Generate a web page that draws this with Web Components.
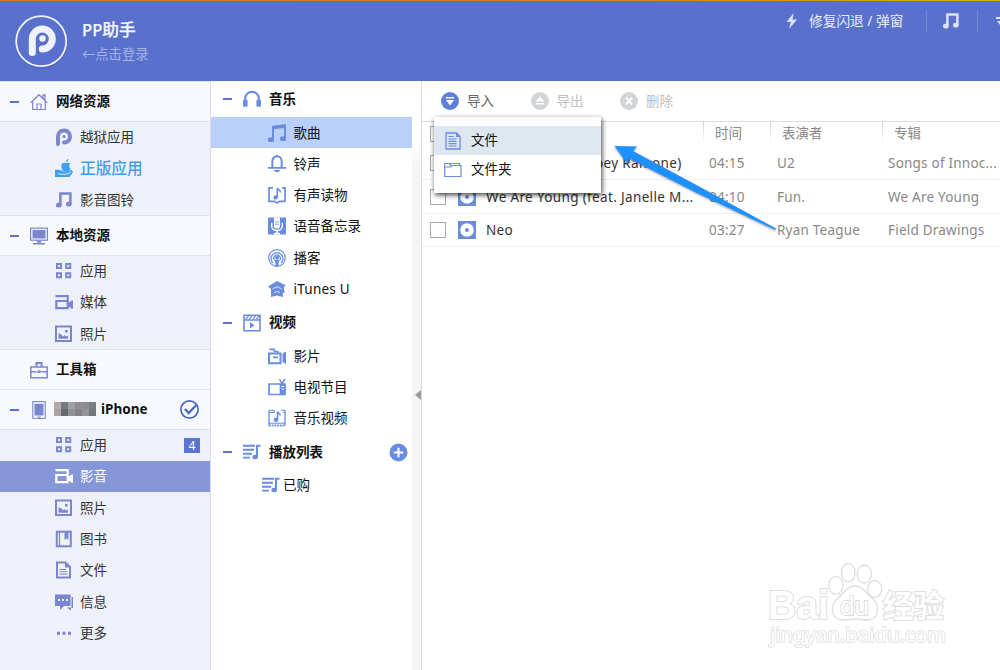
<!DOCTYPE html>
<html lang="zh-CN">
<head>
<meta charset="utf-8">
<title>PP助手</title>
<style>
  body {
    background-color: #fff;
    font-family: 'Noto Sans', 'Noto Sans CJK SC', sans-serif;
    font-size: 13.5px;
    height: 670px;
    line-height: 20px;
    margin: 0;
    overflow: hidden;
    width: 1000px;
  }
</style>
</head>
<body>
<pp-app>
  <pp-header slot="header"></pp-header>

  <pp-sidebar slot="sidebar">
    <pp-heading icon="home" open style="--height: 41.4px">网络资源</pp-heading>
    <pp-group>
      <pp-item icon="pp">越狱应用</pp-item>
      <pp-item icon="apple" class="promo">正版应用</pp-item>
      <pp-item icon="note">影音图铃</pp-item>
    </pp-group>
    <pp-heading icon="monitor" open>本地资源</pp-heading>
    <pp-group>
      <pp-item icon="grid">应用</pp-item>
      <pp-item icon="media">媒体</pp-item>
      <pp-item icon="photo">照片</pp-item>
    </pp-group>
    <pp-heading icon="toolbox">工具箱</pp-heading>
    <pp-heading icon="phone" open>
      <pp-mosaic></pp-mosaic>iPhone
      <pp-icon slot="end" name="check"></pp-icon>
    </pp-heading>
    <pp-group>
      <pp-item icon="grid" badge="4">应用</pp-item>
      <pp-item icon="media" active>影音</pp-item>
      <pp-item icon="photo">照片</pp-item>
      <pp-item icon="book">图书</pp-item>
      <pp-item icon="doc">文件</pp-item>
      <pp-item icon="chat">信息</pp-item>
      <pp-item icon="more">更多</pp-item>
    </pp-group>
  </pp-sidebar>

  <pp-library slot="library">
    <pp-heading icon="headphones" open style="--height: 36.9px">音乐</pp-heading>
    <pp-item icon="song" active>歌曲</pp-item>
    <pp-item icon="bell">铃声</pp-item>
    <pp-item icon="audiobook">有声读物</pp-item>
    <pp-item icon="mic">语音备忘录</pp-item>
    <pp-item icon="podcast">播客</pp-item>
    <pp-item icon="itunesu" class="wide">iTunes U</pp-item>
    <pp-heading icon="clapper" open>视频</pp-heading>
    <pp-item icon="movie">影片</pp-item>
    <pp-item icon="tv">电视节目</pp-item>
    <pp-item icon="mv">音乐视频</pp-item>
    <pp-heading icon="list" open>播放列表<pp-icon slot="end" name="plus"></pp-icon></pp-heading>
    <pp-item icon="list" class="playlist">已购</pp-item>
  </pp-library>

  <pp-tracks slot="main">
    <pp-tool slot="tools" icon="import">导入</pp-tool>
    <pp-tool slot="tools" icon="export" disabled>导出</pp-tool>
    <pp-tool slot="tools" icon="remove" disabled>删除</pp-tool>
    <pp-track name="The Miracle (Of Joey Ramone)" time="04:15" artist="U2" album="Songs of Innoc..."></pp-track>
    <pp-track name="We Are Young (feat. Janelle M..." time="04:10" artist="Fun." album="We Are Young"></pp-track>
    <pp-track name="Neo" time="03:27" artist="Ryan Teague" album="Field Drawings"></pp-track>
    <pp-menu slot="menu"></pp-menu>
  </pp-tracks>
</pp-app>
<pp-pointer></pp-pointer>
<pp-watermark></pp-watermark>

<script>
// every icon is drawn on an 18 x 18 grid with currentColor
const icons = {
  home: '<path d="M.8 9.7 9 1.7l8.2 8M13 5V2h2v5" fill="none" stroke="currentColor" stroke-width="1.3"/><path d="M2.7 9v7.5h12.6V9M7 16v-5h4v5" fill="none" stroke="currentColor" stroke-width="1.2"/>',
  pp: '<path d="M3 16V8.5a6 6 0 1 1 6 6" fill="none" stroke="currentColor" stroke-width="4" stroke-linecap="round"/><circle cx="9" cy="8.5" r="1.6" fill="currentColor"/>',
  apple: '<path d="M13.300 0c.1 1.500-.8 2.800-2.200 3 0-1.600.8-2.700 2.200-3zM6.500 6c.8-2.600 3-2.500 4.600-1.800 1.800-.8 3.400-.2 4.200.9-1.800 1.200-1.500 3.400.3 4.200-.5 1.800-1.500 3.200-2.900 3.200H9C7 11 5.800 8.500 6.500 6z" fill="currentColor"/><path d="M0 10.700h4.500l4.300 1.800h3l5-1.400 1.200 1.800-3.500 5H0z" fill="currentColor"/><path d="M3 14l2 1.200h7l4-2" stroke="#eef1fa" fill="none" stroke-width=".9"/>',
  note: '<path d="M5.400 14V2.500h10V13" fill="none" stroke="currentColor" stroke-width="2.500"/><rect x="1" y="11.800" width="5.600" height="4.800" rx="2" fill="currentColor"/><rect x="11" y="10.800" width="5.600" height="4.800" rx="2" fill="currentColor"/>',
  monitor: '<rect x=".6" y="1.200" width="16.800" height="12" fill="none" stroke="currentColor" stroke-width="1.200"/><path d="M2.500 3h13v8.500h-13zM7 13.500h4v2.300H7zM3 16h12v1.500H3z" fill="currentColor"/>',
  grid: '<path d="M2 2h4v4H2zM11.200 2h4v4h-4zM2 11.200h4v4H2zM11.200 11.200h4v4h-4z" fill="none" stroke="currentColor" stroke-width="2"/>',
  media: '<path d="M.5 3.200h12.200v12H1.300V8h11.400" fill="none" stroke="currentColor" stroke-width="2.200"/><path d="m13 10 3.700-2.600H18v8.400h-1.300L13 13z" fill="currentColor"/>',
  photo: '<rect x="1" y="1.500" width="15" height="14.500" fill="none" stroke="currentColor" stroke-width="2"/><path d="M3.500 8.500h1.200l1.800 1.300L8 11.500l1.700-1.600 1.100 1.500 2.200-1v3.400H3.500zM10 5h2.600v2.600H10z" fill="currentColor"/>',
  toolbox: '<path d="M.8 6h16.400v10.800H.8zM.8 10.700h5.700m5 0h5.700" fill="none" stroke="currentColor" stroke-width="1.500"/><path d="M6.500 6V2h5v4" fill="none" stroke="currentColor" stroke-width="2"/><path d="M7.200 9.500h3.600v2.400H7.200z" fill="currentColor"/>',
  phone: '<rect x="2.800" y=".6" width="12.400" height="17" fill="none" stroke="currentColor" stroke-width="1.100"/><path d="M4.500 2.700h9v11.800h-9zM7.500 15.500h3v1.300h-3z" fill="currentColor"/>',
  check: '<circle cx="9" cy="9" r="8.200" fill="none" stroke="currentColor" stroke-width="1.600"/><path d="m4.600 8.500 3.600 3.900 7.300-7.600" fill="none" stroke="currentColor" stroke-width="2"/>',
  book: '<rect x="1.800" y="1.700" width="14" height="14.600" fill="none" stroke="currentColor" stroke-width="2"/><path d="M4.500 2v14" stroke="currentColor" stroke-width="1.200"/><path d="M9.500 2h4v8l-2-1.700-2 1.700z" fill="currentColor"/>',
  doc: '<path d="M2 1.600h8.500L15 6v10.400H2z" fill="none" stroke="currentColor" stroke-width="2"/><path d="M4.500 8.500H11M4.500 10.800h8M4.500 13.200h8" stroke="currentColor"/><path d="M10 1v5.500h5.500z" fill="currentColor"/>',
  chat: '<path d="M0 1.500h15.500V13H9l-4 4v-4H0z" fill="currentColor"/><path d="M16.500 4H18v11h-2v2.500L12 14.500h4.500z" fill="currentColor"/><path d="M3 6h2v2H3zM7 6h2v2H7zM11 6h2v2h-2z" fill="#eef1fa"/>',
  more: '<path d="M2 7.700h3v3H2zM7.500 7.700h3v3h-3zM13 7.700h3v3h-3z" fill="currentColor"/>',
  headphones: '<path d="M2.200 12V8.500a6.800 6.800 0 0 1 13.600 0V12" fill="none" stroke="currentColor" stroke-width="2"/><rect y="9.500" width="4.600" height="7.300" rx="1.500" fill="currentColor"/><rect x="13.400" y="9.500" width="4.600" height="7.300" rx="1.500" fill="currentColor"/>',
  song: '<path d="M5 15.500V3l12-1.500V14" fill="none" stroke="currentColor" stroke-width="2"/><path d="M4 2 18 .3v3.400L4 5.300z" fill="currentColor"/><rect y="13.500" width="6" height="4.500" rx="1.800" fill="currentColor"/><rect x="12" y="12.500" width="6" height="4.500" rx="1.800" fill="currentColor"/>',
  bell: '<path d="M4.300 12.500V6.500a4.700 5.300 0 0 1 9.400 0v6" fill="none" stroke="currentColor" stroke-width="2"/><path d="M0 12h18v1.800H0zM6 15h6c-.5 3-5.500 3-6 0zM8 0h2v2H8z" fill="currentColor"/>',
  audiobook: '<path d="M5 1.800H1v13.500h5.500L9 17l2.500-1.700H17V1.800h-3" fill="none" stroke="currentColor" stroke-width="1.700"/><path d="M9.300 12V2c.5 1.800 3 1.800 3.300 4.500" fill="none" stroke="currentColor" stroke-width="1.600"/><circle cx="7.600" cy="11.400" r="2.200" fill="currentColor"/>',
  mic: '<path d="M0 .5h18v17H0z" fill="currentColor"/><path d="M6 .5h6v3H6z" fill="#fff"/><rect x="6" y="2" width="6" height="9.500" rx="2.500" fill="#fff"/><path d="M3.700 6v3c0 6 10.600 6 10.600 0V6M9 13v4" fill="none" stroke="#fff" stroke-width="1.400"/><path d="M6 15.800h6v1.700H6z" fill="#fff"/><path d="M7 5h4M7 7.200h4" stroke="currentColor" stroke-width=".8"/>',
  podcast: '<g fill="none" stroke="currentColor"><circle cx="9" cy="9" r="8.300" stroke-width="1.200"/><path d="M5 14a6 6 0 1 1 8 0M6.500 11.500a3.300 3.300 0 1 1 5 0" stroke-width="1.300"/></g><circle cx="9" cy="8.700" r="2" fill="currentColor"/><path d="M7 11h4l-.5 6h-3z" fill="currentColor"/>',
  itunesu: '<path d="M9 1 18 5.500l-2 1.300V10l1 2-2 1v4l-6-1.500L3 17V9L0 6.500z" fill="currentColor"/><path d="m4.500 8.700 4.500-2 4.500 2M9 11.500l-3 1m3-1 3 1" fill="none" stroke="#fff" stroke-width=".8"/>',
  clapper: '<path d="M1 1.300h16v15.500H1zM1 6h16" fill="none" stroke="currentColor" stroke-width="1.600"/><path d="m3 5 2.500-3M6.500 5 9 2m1 3 2.500-3m1 3L16 2" stroke="currentColor" stroke-width="1.200"/><path d="m7 8 4.500 3.300L7 14.500z" fill="currentColor"/>',
  movie: '<path d="M1 6.500h11.500v9.800H1z" fill="none" stroke="currentColor" stroke-width="2"/><path d="M1.500 1.500H7v2.300h3.500V6H8.700V5.300H5.500V3.300h-4zM5 9.500h5v1.700H5zM14.500 7 17 4.800h1v12h-1l-2.500-2.200z" fill="currentColor"/>',
  tv: '<path d="M1 6h16v10.500H1zM12.500 6v10" fill="none" stroke="currentColor" stroke-width="1.700"/><path d="M12 6h5v10h-5z" fill="currentColor"/><path d="m11.500 1 2.500 4.500L17 1" fill="none" stroke="currentColor" stroke-width="1.500"/><path d="M13.500 8.500H16m-2.500 2.500H16" stroke="#fff"/>',
  mv: '<path d="M1 1.300v15.500m16 0V1.300" fill="none" stroke="currentColor" stroke-width="1.300"/><path d="M1 1.300h5.500v2.200H1M17 1.300h-4m4 2.200h-2M.5 14.200h17" fill="none" stroke="currentColor" stroke-width="1"/><path d="M1 16.500h16" stroke="currentColor" stroke-width="1.800" stroke-dasharray="1.700 1"/><path d="M9.500 11.500v-9c.5 2 2.500 2 3 4" fill="none" stroke="currentColor" stroke-width="1.600"/><circle cx="8" cy="10.800" r="2.200" fill="currentColor"/>',
  list: '<path d="M0 2.800h12M0 6.800h11M0 10.700h9M0 14.600h7" stroke="currentColor" stroke-width="1.900"/><path d="M14 14V2.800h3.500" fill="none" stroke="currentColor" stroke-width="2"/><ellipse cx="12.200" cy="14" rx="2.800" ry="2.200" fill="currentColor"/>',
  plus: '<circle cx="9" cy="9" r="8.500" fill="currentColor"/><path d="M9 4.500v9M4.500 9h9" stroke="#fff" stroke-width="2"/>',
  import: '<circle cx="9" cy="9" r="9" fill="currentColor"/><path d="M5 5h8v1.500H5zM5 8h8l-4 5.500z" fill="#fff"/>',
  export: '<circle cx="9" cy="9" r="9" fill="currentColor"/><path d="m9 4.500 4.500 5h-9zM5 11h8v1.500H5z" fill="#fff"/>',
  remove: '<circle cx="9" cy="9" r="9" fill="currentColor"/><path d="m6 5.700 6 6.600m0-6.600-6 6.600" stroke="#fff" stroke-width="2"/>',
  disc: '<path d="M0 0h18v18H0z" fill="currentColor"/><circle cx="9" cy="9" r="6.800" fill="#fff"/><circle cx="9" cy="9" r="2" fill="currentColor"/>',
  file: '<path d="M2 1h10.500L16 4.500V17H2z" fill="none" stroke="currentColor" stroke-width="1.300"/><path d="M12 1v4h4" fill="currentColor"/><path d="M4.500 4.500h5M4.500 7h8M4.500 9.300h8M4.500 11.600h8M4.500 14h8" stroke="currentColor" stroke-width="1.200"/>',
  folder: '<path d="M.7 15.500v-13h4.600L7 4.500h10v11zM6 2.500h9.500v2M.7 6h6l1.300-1.500" fill="none" stroke="currentColor" stroke-width="1.200"/>',
  bolt: '<path d="M10.800.8 3.500 10h4.300L6 17l8-9.600H9.500z" fill="currentColor"/>'
}

class Base extends HTMLElement {
  constructor () {
    super()
    this.shadow = this.attachShadow({ mode: 'open' })
  }

  connectedCallback () {
    this.render()
  }
}

class Icon extends Base {
  render () {
    this.shadow.innerHTML =
      /* html */`
      <style>
        :host { display: block; flex: none; height: 18px; width: 18px; }
        svg { display: block; height: 100%; width: 100%; }
      </style>
      <svg viewBox="0 0 18 18">${icons[this.getAttribute('name')]}</svg>
    `
  }
}

class App extends Base {
  render () {
    this.shadow.innerHTML =
      /* html */`
      <style>
        :host {
          display: grid;
          grid-template-columns: 211px 211px 578px;
          grid-template-rows: 81px 589px;
          height: 670px;
        }
        slot[name="header"]::slotted(*) { grid-column: 1 / -1; }
      </style>
      <slot name="header"></slot>
      <slot name="sidebar"></slot>
      <slot name="library"></slot>
      <slot name="main"></slot>
    `
  }
}

class Header extends Base {
  render () {
    this.shadow.innerHTML =
      /* html */`
      <style>
        :host {
          background-color: #5971cd;
          border-bottom: 1px solid #4a62c4;
          border-top: 1px solid;
          border-image: linear-gradient(90deg, #d07a1c, #cf8a12 60%, #d6b30c) 1 0 0 0;
          box-sizing: border-box;
          color: #e9edfb;
          display: flex;
          overflow: hidden;
          padding: 1px 0 0 15px;
        }
        .logo { display: block; height: 54px; margin-top: 13px; width: 54px; }
        .user { flex: 1; padding: 16px 0 0 13px; }
        .name { color: #f4f6ff; font-size: 16.700px; font-weight: 500; line-height: 23px; -webkit-text-stroke: .25px; }
        .login { color: #a5b3e8; font-size: 13.300px; line-height: 26px; }
        .tools { display: flex; height: 22px; margin-top: 8px; align-items: center; }
        .repair { margin: 0 21px 0 8px; white-space: nowrap; width: 96px; font-size: 13.700px; }
        .line { background-color: #7387d7; height: 22px; width: 1px; }
        .music { margin: 0 17px 0 15px; }
        .bolt, .music { color: #dbe2f8; }
        .caret { height: 8px; margin-left: 18px; width: 4px; }
      </style>
      <svg class="logo" viewBox="0 0 54 54">
        <circle cx="26.500" cy="27.500" r="25" fill="none" stroke="#3f58b0" stroke-width="2" opacity=".5"/>
        <circle cx="26.200" cy="26.200" r="25" fill="#5971cd" stroke="#f0f3fd" stroke-width="1.800"/>
        <path d="M17.300 37.500V24a10 10 0 1 1 10 10" fill="none" stroke="#f0f3fd" stroke-width="7" stroke-linecap="round"/>
        <circle cx="27.500" cy="23.500" r="3.200" fill="#f0f3fd"/>
      </svg>
      <div class="user">
        <div class="name">PP助手</div>
        <div class="login">←点击登录</div>
      </div>
      <div class="tools">
        <pp-icon class="bolt" name="bolt"></pp-icon>
        <span class="repair">修复闪退 / 弹窗</span>
        <span class="line"></span>
        <pp-icon class="music" name="note"></pp-icon>
        <span class="line"></span>
        <svg class="caret" viewBox="0 0 4 8"><path d="M0 0h4v2H0zM1 4h3v4z" fill="#dbe2f8"/></svg>
      </div>
    `
  }
}

class Sidebar extends Base {
  render () {
    this.shadow.innerHTML =
      /* html */`
      <style>
        :host {
          background-color: #eef1fa;
          border-right: 1px solid #d9dde6;
          color: #333;
          overflow: hidden;
          --accent: #7b86cd;
          --active: #8597d9;
          --active-text: #fff;
          --head: #f8f9fe;
          --line: #dfe2ea;
          --indent: 55px;
          --gap: 7px;
          --end: 11px;
        }
      </style>
      <slot></slot>
    `
  }
}

class Group extends Base {
  render () {
    this.shadow.innerHTML = '<style>:host { display: block; }</style><slot></slot>'
  }
}

class Heading extends Base {
  render () {
    this.shadow.innerHTML =
      /* html */`
      <style>
        :host {
          align-items: center;
          background-color: var(--head);
          border-bottom: 1px solid var(--line);
          border-top: 1px solid var(--line);
          box-sizing: border-box;
          color: #111;
          display: flex;
          font-weight: 700;
          height: var(--height, 41.100px);
          margin-bottom: -1px;
          padding: 0 var(--end) 0 var(--head-indent, 10px);
          position: relative;
        }
        .toggle { height: 2px; width: 9px; }
        :host([open]) .toggle { background-color: #5a74cd; }
        .icon { color: var(--accent); margin: 0 8px 0 11px; }
        .label { align-items: center; display: flex; flex: 1; margin-top: -1px; }
        ::slotted(pp-icon) { color: var(--end-color, #4a66c4); height: 19px; width: 19px; }
      </style>
      <span class="toggle"></span>
      <pp-icon class="icon" name="${this.getAttribute('icon')}"></pp-icon>
      <span class="label"><slot></slot></span>
      <slot name="end"></slot>
    `
  }
}

class Item extends Base {
  render () {
    const badge = this.getAttribute('badge')

    this.shadow.innerHTML =
      /* html */`
      <style>
        :host {
          align-items: center;
          box-sizing: border-box;
          display: flex;
          height: 31.300px;
          padding: 0 10px 0 var(--indent);
        }
        :host([active]) { background-color: var(--active); color: var(--active-text); }
        pp-icon { color: var(--accent); margin-right: var(--gap); }
        :host([active]) pp-icon { color: var(--active-icon, #fff); }
        :host(.promo), :host(.promo) pp-icon { color: #3fa0f2; }
        :host(.promo) { font-size: 15.700px; font-weight: 500; }
        :host(.wide) { letter-spacing: .25px; }
        :host(.playlist) { padding-left: 51px; }
        :host(.playlist) pp-icon { margin-right: 3px; }
        .label { flex: 1; }
        .badge {
          background-color: #5b74d0;
          color: #fff;
          font-size: 12px;
          height: 15px;
          line-height: 15px;
          text-align: center;
          width: 16px;
        }
      </style>
      <pp-icon name="${this.getAttribute('icon')}"></pp-icon>
      <span class="label"><slot></slot></span>
      ${badge ? `<span class="badge">${badge}</span>` : ''}
    `
  }
}

class Mosaic extends Base {
  render () {
    const cells = ['#b3aba8', '#777b80', '#a0a0a2', '#8f8f91', '#8a8c8f', '#7b7d80', '#aaa5a3', '#66696f', '#929294', '#828284', '#929497', '#74777b']

    this.shadow.innerHTML =
      /* html */`
      <style>
        :host {
          display: grid;
          filter: blur(.6px);
          grid-template-columns: repeat(6, 7px);
          grid-template-rows: 7px 7px;
          margin: 0 5px 0 -2px;
        }
      </style>
      ${cells.map(color => `<i style="background-color: ${color}"></i>`).join('')}
    `
  }
}

class Library extends Base {
  render () {
    this.shadow.innerHTML =
      /* html */`
      <style>
        :host {
          border-right: 1px solid #d9dde3;
          color: #111;
          display: flex;
          --accent: #698be0;
          --active: #b8d0fa;
          --active-text: #111;
          --active-icon: #698be0;
          --head: transparent;
          --line: transparent;
          --head-indent: 12px;
          --height: 36.300px;
          --indent: 57px;
          --gap: 7.500px;
          --end: 4px;
          --end-color: #698be0;
        }
        .tree { flex: none; width: 201px; }
        .bar {
          align-items: center;
          background: linear-gradient(#fff 60px, #f5f5f6 90px);
          display: flex;
          flex: 1;
          justify-content: flex-end;
          padding-top: 38px;
        }
      </style>
      <div class="tree"><slot></slot></div>
      <div class="bar"><svg width="6" height="10"><path d="M6 0v10L0 5z" fill="#999"/></svg></div>
    `
  }
}

class Tool extends Base {
  render () {
    this.shadow.innerHTML =
      /* html */`
      <style>
        :host { align-items: center; color: #666; display: flex; gap: 8px; width: 89.500px; }
        :host([disabled]) { color: #c0c0c0; }
        pp-icon { color: #5f7fd8; }
        :host([disabled]) pp-icon { color: #d2d5d8; }
      </style>
      <pp-icon name="${this.getAttribute('icon')}"></pp-icon>
      <slot></slot>
    `
  }
}

class Tracks extends Base {
  render () {
    this.shadow.innerHTML =
      /* html */`
      <style>
        :host { color: #888; display: block; overflow: hidden; position: relative; }
        .tools {
          border-bottom: 1px solid #dadcdf;
          box-sizing: border-box;
          display: flex;
          height: 41px;
          padding-left: 19px;
        }
        .head {
          display: grid;
          grid-template-columns: 281px 67px 112px 118px;
          height: 24.500px;
          line-height: 23px;
        }
        .head span {
          border-left: 1px solid;
          border-image: linear-gradient(#ccc, #fff 80%) 1;
          padding-left: 11px;
        }
        .all { border: 1px solid #aaa; height: 14px; margin: 4px 0 0 8px; width: 14px; }
      </style>
      <div class="tools"><slot name="tools"></slot></div>
      <div class="head"><i class="all"></i><span>时间</span><span>表演者</span><span>专辑</span></div>
      <slot></slot>
      <slot name="menu"></slot>
    `
  }
}

class Track extends Base {
  render () {
    this.shadow.innerHTML =
      /* html */`
      <style>
        :host {
          align-items: center;
          border-bottom: 1px solid #eef0f2;
          box-sizing: border-box;
          display: grid;
          grid-template-columns: 28px 28px 223px 68px 111px 112px;
          height: 33.500px;
          letter-spacing: .22px;
          padding: 1px 0 0 8px;
          white-space: nowrap;
        }
        .box { border: 1px solid #aaa; height: 14px; width: 14px; }
        .name { color: #333; letter-spacing: .35px; }
        pp-icon { color: #698be0; }
      </style>
      <i class="box"></i>
      <pp-icon name="disc"></pp-icon>
      <span class="name">${this.getAttribute('name')}</span>
      <span>${this.getAttribute('time')}</span>
      <span>${this.getAttribute('artist')}</span>
      <span>${this.getAttribute('album')}</span>
    `
  }
}

class Menu extends Base {
  render () {
    this.shadow.innerHTML =
      /* html */`
      <style>
        :host {
          background-color: #fff;
          box-shadow: 1px 2px 5px rgba(0, 0, 0, .75);
          box-sizing: border-box;
          color: #111;
          height: 76px;
          left: 12px;
          padding-top: 9px;
          position: absolute;
          top: 36px;
          width: 167px;
        }
        div { align-items: center; display: flex; gap: 9px; height: 29px; line-height: 19px; padding-left: 10px; }
        .active { background-color: #dee6f0; }
        pp-icon { color: #698be0; }
      </style>
      <div class="active"><pp-icon name="file"></pp-icon>文件</div>
      <div><pp-icon name="folder"></pp-icon>文件夹</div>
    `
  }
}

class Pointer extends Base {
  render () {
    this.shadow.innerHTML =
      /* html */`
      <style>
        :host { filter: drop-shadow(0 1px 1px rgba(0, 0, 0, .4)); left: 610px; position: absolute; top: 140px; }
        svg { display: block; }
      </style>
      <svg width="170" height="95"><path d="m4.500 6 22.500.5-4 4.500L90 47l76 41.500-.7 1.500L88 53.500 19 18.500 17.500 24z" fill="#1e90ff"/></svg>
    `
  }
}

class Watermark extends Base {
  render () {
    this.shadow.innerHTML =
      /* html */`
      <style>
        :host { left: 760px; position: absolute; top: 555px; }
        svg { display: block; font-family: 'Liberation Sans', 'Noto Sans CJK SC', sans-serif; }
        text { paint-order: stroke; }
        .url { font-family: 'Noto Sans', sans-serif; }
      </style>
      <svg width="195" height="100" fill="#fff" stroke="#dedede" stroke-width="2">
        <text x="8" y="63.500" font-size="40" font-weight="700" textLength="61" lengthAdjust="spacingAndGlyphs">Bai</text>
        <g stroke-width="1.300">
          <ellipse cx="76" cy="30.300" rx="7.200" ry="9"/>
          <ellipse cx="88.300" cy="17.700" rx="6.800" ry="9.200"/>
          <ellipse cx="104.300" cy="19" rx="7.200" ry="9"/>
          <ellipse cx="114.700" cy="34" rx="7" ry="8.500"/>
          <path d="M95 31c8 0 11 7 17 12 9 8 7 22-5 22-5 0-7-1-12-1s-7 1-12 1c-12 0-14-14-5-22 6-5 9-12 17-12z"/>
        </g>
        <text x="80" y="59.500" font-size="25" textLength="29" lengthAdjust="spacingAndGlyphs">du</text>
        <text x="123" y="61.500" font-size="31" font-weight="700" textLength="61" lengthAdjust="spacingAndGlyphs">经验</text>
        <text class="url" x="10" y="87" font-size="20" stroke-width="1.600" textLength="176" lengthAdjust="spacingAndGlyphs">jingyan.baidu.com</text>
      </svg>
    `
  }
}

customElements.define('pp-icon', Icon)
customElements.define('pp-app', App)
customElements.define('pp-header', Header)
customElements.define('pp-sidebar', Sidebar)
customElements.define('pp-group', Group)
customElements.define('pp-heading', Heading)
customElements.define('pp-item', Item)
customElements.define('pp-mosaic', Mosaic)
customElements.define('pp-library', Library)
customElements.define('pp-tool', Tool)
customElements.define('pp-tracks', Tracks)
customElements.define('pp-track', Track)
customElements.define('pp-menu', Menu)
customElements.define('pp-pointer', Pointer)
customElements.define('pp-watermark', Watermark)
</script>
</body>
</html>
